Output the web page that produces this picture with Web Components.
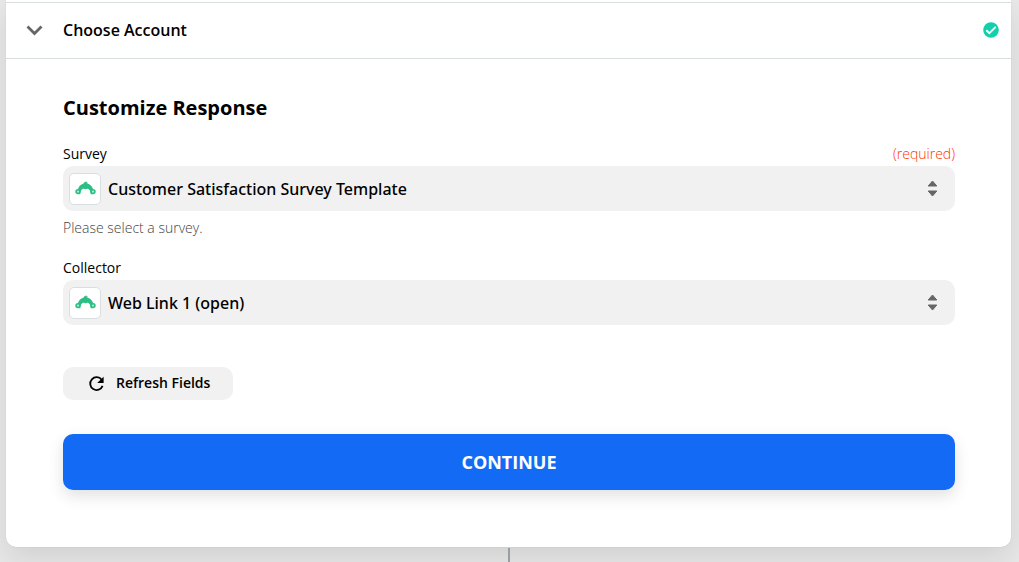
<!DOCTYPE html>
<html lang="en">
<head>
  <meta charset="utf-8">
  <meta name="viewport" content="width=device-width, initial-scale=1">
  <title>Customize Response</title>
  <style>
    html { background: #e8e8e8; }
    body {
      margin: 0;
      color: #000;
      font-family: 'Open Sans', 'Noto Sans', sans-serif;
      font-size: 14px;
      line-height: 20px;
    }
  </style>
</head>
<body>
  <step-card>
    <step-header slot="header">Choose Account</step-header>
    <h2 slot="title">Customize Response</h2>
    <select-field label="Survey" value="Customer Satisfaction Survey Template" help="Please select a survey." required></select-field>
    <select-field label="Collector" value="Web Link 1 (open)"></select-field>
    <refresh-button slot="actions">Refresh Fields</refresh-button>
    <continue-button slot="actions">Continue</continue-button>
  </step-card>

  <script>
    class StepCard extends HTMLElement {
      constructor() {
        super()
        this.attachShadow({ mode: 'open' })
      }

      connectedCallback() {
        this.shadowRoot.innerHTML = /* html */`
          <style>
            * { box-sizing: border-box; }
            :host {
              display: block;
              overflow: hidden;
              padding: 0 8px 0 6px;
            }

            .card {
              background: #fff;
              border-radius: 0 0 10px 10px;
              box-shadow: 0 0 1px rgba(0,0,0,0.2), 0 12px 30px rgba(0,0,0,0.1);
              padding-top: 2px;
            }
            .body { padding: 35px 56px 57px 57px; }
            .fields {
              display: flex;
              flex-direction: column;
              gap: 20px;
              margin: 22px 0 42px;
            }
            .actions {
              display: flex;
              flex-direction: column;
              gap: 34px;
            }
            ::slotted(h2) {
              margin: 0;
              font-size: 20px;
              font-weight: 700;
              line-height: 28px;
            }
            .connector {
              width: 2px;
              height: 14px;
              margin: 1px auto 0;
              background: #95a0a3;
            }
          </style>

          <section class="card">
            <slot name="header"></slot>
            <div class="body">
              <slot name="title"></slot>
              <div class="fields"><slot></slot></div>
              <div class="actions"><slot name="actions"></slot></div>
            </div>
          </section>
          <div class="connector"></div>
        `
      }
    }

    class StepHeader extends HTMLElement {
      constructor() {
        super()
        this.attachShadow({ mode: 'open' })
      }

      connectedCallback() {
        this.shadowRoot.innerHTML = /* html */`
          <style>
            * { box-sizing: border-box; }
            :host { display: block; }

            button {
              display: flex;
              align-items: center;
              gap: 20px;
              width: 100%;
              height: 57px;
              padding: 0 12px 2px 20px;
              border: solid #d7dddf;
              border-width: 1px 0;
              background: none;
              color: inherit;
              font: 600 16px/24px 'Open Sans', sans-serif;
              text-align: left;
              cursor: pointer;
            }
            .label { flex: 1; }
            svg { display: block; flex: none; }
          </style>

          <button type="button" aria-expanded="false">
            <svg width="17" height="12" viewBox="0 0 17 12" aria-hidden="true">
              <path d="M1.5 2.4 8.5 9.4 15.5 2.4" fill="none" stroke="#666" stroke-width="2.8"/>
            </svg>
            <span class="label"><slot></slot></span>
            <svg width="16" height="16" viewBox="0 0 16 16" role="img" aria-label="Complete">
              <circle cx="8" cy="8" r="7.8" fill="#13d0ac"/>
              <path d="M3.3 8.2 6.4 11.2 12.7 4.9" fill="none" stroke="#fff" stroke-width="1.9"/>
            </svg>
          </button>
        `
      }
    }

    class SelectField extends HTMLElement {
      constructor() {
        super()
        this.attachShadow({ mode: 'open' })
      }

      connectedCallback() {
        this.render()
      }

      render() {
        const label = this.getAttribute('label')
        const value = this.getAttribute('value')
        const help = this.getAttribute('help')
        const required = this.hasAttribute('required')

        this.shadowRoot.innerHTML = /* html */`
          <style>
            * { box-sizing: border-box; }
            :host { display: block; }

            .top {
              display: flex;
              justify-content: space-between;
              margin-bottom: 2px;
            }
            label { font-weight: 500; }
            .required { color: #ff3300; font-weight: 300; }

            .control { display: grid; align-items: center; }
            .control > * { grid-area: 1 / 1; }
            select {
              width: 100%;
              height: 45px;
              padding: 0 45px;
              border: 0;
              border-radius: 10px;
              appearance: none;
              background: #f1f1f1;
              color: inherit;
              font: 500 16px/24px 'Noto Sans', 'Open Sans', sans-serif;
              cursor: pointer;
            }
            .app, .arrows { pointer-events: none; z-index: 1; }
            .app {
              display: grid;
              place-items: center;
              width: 32px;
              height: 32px;
              margin-left: 6px;
              border: 1px solid #d9dfe1;
              border-radius: 5px;
              background: #fff;
            }
            .arrows { justify-self: end; margin-right: 17px; }
            svg { display: block; }
            .help {
              margin: 7px 0 0;
              color: #444;
              font-weight: 300;
            }
          </style>

          <div class="top">
            <label for="field">${label}</label>
            ${required ? '<span class="required">(required)</span>' : ''}
          </div>
          <div class="control">
            <select id="field"><option>${value}</option></select>
            <span class="app">
              <svg width="22" height="16" viewBox="0 0 22 16" aria-hidden="true">
                <path d="M4 8C4.8 5.2 6.8 3.3 9.3 2.7 9.8 1.5 11 .7 12.9 .4L12.4 1.4 14 1.4 13.1 2.6C16 3.2 18.2 5.2 19 8L18.4 13.2H16.8C16.6 10 15.6 8.4 14 7.8 13 7.4 12.2 7.8 11.5 8.2 10.8 7.8 10 7.4 9 7.8 7.4 8.4 6.4 10 6.2 13.2H4.6Z" fill="#2dbe83"/>
                <circle cx="4" cy="10.6" r="1.9" fill="#b6e8d3" stroke="#2dbe83" stroke-width="1.6"/>
                <circle cx="19" cy="10.6" r="1.9" fill="#b6e8d3" stroke="#2dbe83" stroke-width="1.6"/>
              </svg>
            </span>
            <svg class="arrows" width="11" height="18" viewBox="0 0 11 18" aria-hidden="true">
              <path d="M5.5 1 9.8 6H1.2ZM5.5 16 9.8 11H1.2Z" fill="#666" stroke="#666" stroke-width="1" stroke-linejoin="round"/>
            </svg>
          </div>
          ${help ? `<p class="help">${help}</p>` : ''}
        `
      }
    }

    class RefreshButton extends HTMLElement {
      constructor() {
        super()
        this.attachShadow({ mode: 'open' })
      }

      connectedCallback() {
        this.shadowRoot.innerHTML = /* html */`
          <style>
            :host { display: block; }

            button {
              display: flex;
              align-items: center;
              gap: 11px;
              height: 33px;
              padding: 0 23px 1px 25px;
              border: 0;
              border-radius: 10px;
              background: #f1f1f1;
              color: inherit;
              font: 600 14px/20px 'Open Sans', sans-serif;
              cursor: pointer;
            }
            svg { display: block; }
          </style>

          <button type="button">
            <svg width="17" height="17" viewBox="0 0 17 17" aria-hidden="true">
              <path d="M13.7 4.7A6.4 6.4 0 1 0 14.6 10.9" fill="none" stroke="#000" stroke-width="1.8"/>
              <path d="M15.6 1.7V8.1H9.2Z"/>
            </svg>
            <slot></slot>
          </button>
        `
      }
    }

    class ContinueButton extends HTMLElement {
      constructor() {
        super()
        this.attachShadow({ mode: 'open' })
      }

      connectedCallback() {
        this.shadowRoot.innerHTML = /* html */`
          <style>
            :host { display: block; }

            button {
              display: block;
              width: 100%;
              height: 56px;
              border: 0;
              border-radius: 10px;
              background: #136bf5;
              box-shadow: 0 6px 16px rgba(0,0,0,0.12);
              color: #fff;
              font: 700 18px/24px 'Open Sans', sans-serif;
              text-transform: uppercase;
              cursor: pointer;
            }
          </style>

          <button type="button"><slot></slot></button>
        `
      }
    }

    customElements.define('step-card', StepCard)
    customElements.define('step-header', StepHeader)
    customElements.define('select-field', SelectField)
    customElements.define('refresh-button', RefreshButton)
    customElements.define('continue-button', ContinueButton)
  </script>
</body>
</html>
